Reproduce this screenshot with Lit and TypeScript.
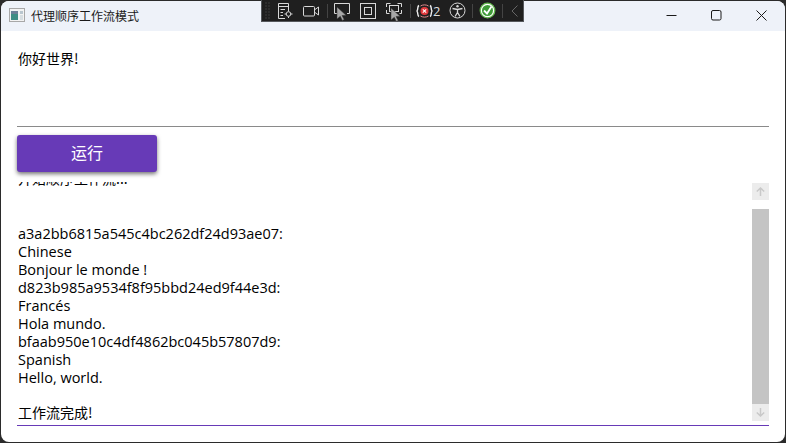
import { LitElement, html, css, svg } from "lit";
import { customElement } from "lit/decorators.js";

const LINES = [
  "开始顺序工作流...", "", "",
  "a3a2bb6815a545c4bc262df24d93ae07:", "Chinese", "Bonjour le monde !",
  "d823b985a9534f8f95bbd24ed9f44e3d:", "Francés", "Hola mundo.",
  "bfaab950e10c4df4862bc045b57807d9:", "Spanish", "Hello, world.", "", "工作流完成!",
];

@customElement("app-root")
export class AppRoot extends LitElement {
  static styles = css`
    :host { display: block; width: 786px; height: 443px; background: #2b2b2b; overflow: hidden;
      font-family: "Open Sans", "Noto Sans CJK SC", sans-serif; font-size: 14.5px; color: #000; position: relative; }
    .win { box-sizing: border-box; width: 784px; height: 441px; margin-left: 1px; margin-top: 1px; background: #fff;
      border-radius: 8px; overflow: hidden; display: flex; flex-direction: column; }
    .title { height: 28px; padding-bottom: 2px; flex: none; background: #eef2f9; display: flex; align-items: center; }
    .appicon { margin-left: 8px; width: 16px; height: 14px; flex: none; }
    .title-text { margin-left: 6px; font-size: 12px; color: #1a1a1a; font-family: "Noto Sans CJK SC", sans-serif; flex: 1; }
    .ctl { width: 45px; height: 28px; display: flex; align-items: center; justify-content: center; flex: none; }
    .ctls { display: flex; margin-right: 1px; }
    .body { flex: 1; display: flex; flex-direction: column; padding: 0 16px; min-height: 0; }
    .input { height: 96px; flex: none; box-sizing: border-box; border-bottom: 1px solid #8a8a8a; padding: 18px 1px 0; line-height: 18px;
      font-family: "Noto Sans CJK SC", sans-serif; font-size: 14px; }
    .btn { margin-top: 8px; width: 140px; height: 33px; padding-bottom: 4px; flex: none; border-radius: 3px; background: #673ab7; color: #fff;
      display: flex; align-items: center; justify-content: center; font-size: 16px; font-family: "Noto Sans CJK SC", sans-serif;
      box-shadow: 0 2px 4px rgba(0,0,0,.55); }
    .out { margin-top: 10px; height: 244px; flex: none; box-sizing: border-box; border-bottom: 1px solid #673ab7; display: flex; overflow: hidden; }
    .log { flex: 1; min-width: 0; padding-left: 1px; margin-top: -11px; line-height: 18px; }
    .ln { height: 18px; white-space: pre; }
    .cjk { font-family: "Noto Sans CJK SC", sans-serif; font-size: 14px; line-height: 14px; }
    .sb { width: 17px; flex: none; display: flex; flex-direction: column; padding-top: 1px; }
    .sb-btn { height: 17px; background: #ececec; flex: none; display: flex; align-items: center; justify-content: center; }
    .sb-gap { height: 9px; flex: none; }
    .sb-thumb { height: 195px; background: #c4c4c4; flex: none; }
    .tools { position: absolute; left: 261px; top: 0; width: 263px; height: 22px; box-sizing: border-box; background: #1f1f1f;
      border: 1px solid #55585c; border-top: none; }
    .tools svg { position: absolute; left: 0; top: 0; }
    .two { position: absolute; left: 171px; top: 1px; font-family: "Open Sans", sans-serif; font-size: 13px; line-height: 20px; color: #ddd; }
  `;

  private tools() {
    const c = "#d8d8d8";
    const cursor = (x: number, y: number) => svg`<path d="M${x} ${y}l9 8.200-4 .3 2.200 4-1.900.9-2-4.100-3.300 2.700z" fill="#a8a8a8" stroke="#333" stroke-width=".5"/>`;
    return html`<svg width="262" height="22" viewBox="0 0 262 22" fill="none" stroke="${c}" stroke-width="1">
      ${svg`
      <path d="M4 2.500v17M7 2.500v17" stroke="#5a5a5a" stroke-dasharray="1 2"/>
      <path d="M26.500 11V3.500H16.500V18.500H23M16.500 6.500H26.500M18.500 9.500H23M18.500 12.500H21M18.500 15.500H21"/>
      <circle cx="26.500" cy="14" r="2.300"/><path d="M26.500 10v1.500M26.500 16.500v1.500M22.500 14h1.500M29 14h1.500"/>
      <rect x="41.500" y="6.500" width="11" height="9.500" rx="1"/><path d="M53 9.500l3.500-2.500v8L53 12.500" />
      <path d="M65.500 4v14M148.500 4v14M210.500 4v14M240.500 4v14" stroke="#444"/>
      <path d="M75 13.500h-2.500V3.500h15v10H85" />
      ${cursor(75, 7)}
      <rect x="98.500" y="3.500" width="15" height="15"/><rect x="102.500" y="7.500" width="7" height="7"/>
      <path d="M124.500 7V3.500h4M139.500 7V3.500h-4M124.500 10v3.500h3M139.500 10v3.500h-2" />
      <rect x="127.500" y="5.500" width="9" height="6" />
      ${cursor(129, 8)}
      <path d="M157 5.500c-2 1-.5 3-2 5.500 1.500 2.500 0 4.500 2 5.500M168 5.500c2 1 .5 3 2 5.500-1.500 2.500 0 4.500-2 5.500" stroke="#f0f0f0" stroke-width="1.400"/>
      <path d="M158.500 6c2.500-1.500 5.500-1.500 8 0M158.500 16c2.500 1.500 5.500 1.500 8 0" stroke="#e08a8c"/>
      <circle cx="162.500" cy="11" r="4" fill="#e0383c" stroke="none"/>
      <path d="M160.800 9.300l3.400 3.400M164.200 9.300l-3.400 3.400" stroke="#fff" stroke-width="1.100"/>
      <circle cx="195.500" cy="10.500" r="7.500"/>
      <circle cx="195.500" cy="6.300" r="1.200" fill="${c}" stroke="none"/>
      <path d="M190.500 8.500l5 1 5-1M195.500 9.500v3M195.500 12.500l-2.500 4M195.500 12.500l2.500 4" stroke-width="1.300"/>
      <circle cx="225.500" cy="10.500" r="7.300" fill="#fff" stroke="#63b84d" stroke-width="1.300"/>
      <circle cx="225.500" cy="10.500" r="5.500" fill="#3f9b37" stroke="none"/>
      <path d="M222 10.500l3 3 4.500-7" stroke="#fff" stroke-width="1.800"/>
      <path d="M255.500 5.500l-5.500 5.500 5.500 5.500" stroke="#666" />
      `}
    </svg><span class="two">2</span>`;
  }

  render() {
    return html`
      <div class="win">
        <div class="title">
          <svg class="appicon" viewBox="0 0 16 14">
            <rect x=".5" y=".5" width="15" height="13" fill="#f3f3f3" stroke="#a8a8a8"/>
            <rect x="2" y="3" width="7" height="9" fill="#3f8c83"/>
            <rect x="2" y="3" width="7" height="3" fill="#6c7f96"/>
            <rect x="11" y="3" width="3" height="3" fill="#b9c6cf"/>
            <rect x="11" y="7" width="3" height="5" fill="#d7dee2"/>
          </svg>
          <span class="title-text">代理顺序工作流模式</span>
          <div class="ctls">
            <div class="ctl"><svg width="11" height="11" viewBox="0 0 11 11"><path d="M.5 5.500h10" stroke="#1a1a1a"/></svg></div>
            <div class="ctl"><svg width="11" height="11" viewBox="0 0 11 11" fill="none"><rect x=".5" y=".5" width="9.500" height="9.500" rx="1.500" stroke="#1a1a1a"/></svg></div>
            <div class="ctl"><svg width="11" height="11" viewBox="0 0 11 11"><path d="M.5 .5l10 10M10.500 .5l-10 10" stroke="#1a1a1a"/></svg></div>
          </div>
        </div>
        <div class="body">
          <div class="input">你好世界!</div>
          <div class="btn">运行</div>
          <div class="out">
            <div class="log">
              ${LINES.map((l) => html`<div class="ln ${/[\u4e00-\u9fff]/.test(l) ? "cjk" : ""}">${l}</div>`)}
            </div>
            <div class="sb">
              <div class="sb-btn"><svg width="9" height="9" viewBox="0 0 9 9" fill="none" stroke="#c9c9c9" stroke-width="1.500"><path d="M.8 4.500L4.500 1l3.700 3.500M4.500 1.500V9"/></svg></div>
              <div class="sb-gap"></div>
              <div class="sb-thumb"></div>
              <div class="sb-btn"><svg width="9" height="9" viewBox="0 0 9 9" fill="none" stroke="#c9c9c9" stroke-width="1.500"><path d="M.8 4.500L4.500 8l3.700-3.500M4.500 7.500V0"/></svg></div>
            </div>
          </div>
        </div>
      </div>
      <div class="tools">${this.tools()}</div>
    `;
  }
}
